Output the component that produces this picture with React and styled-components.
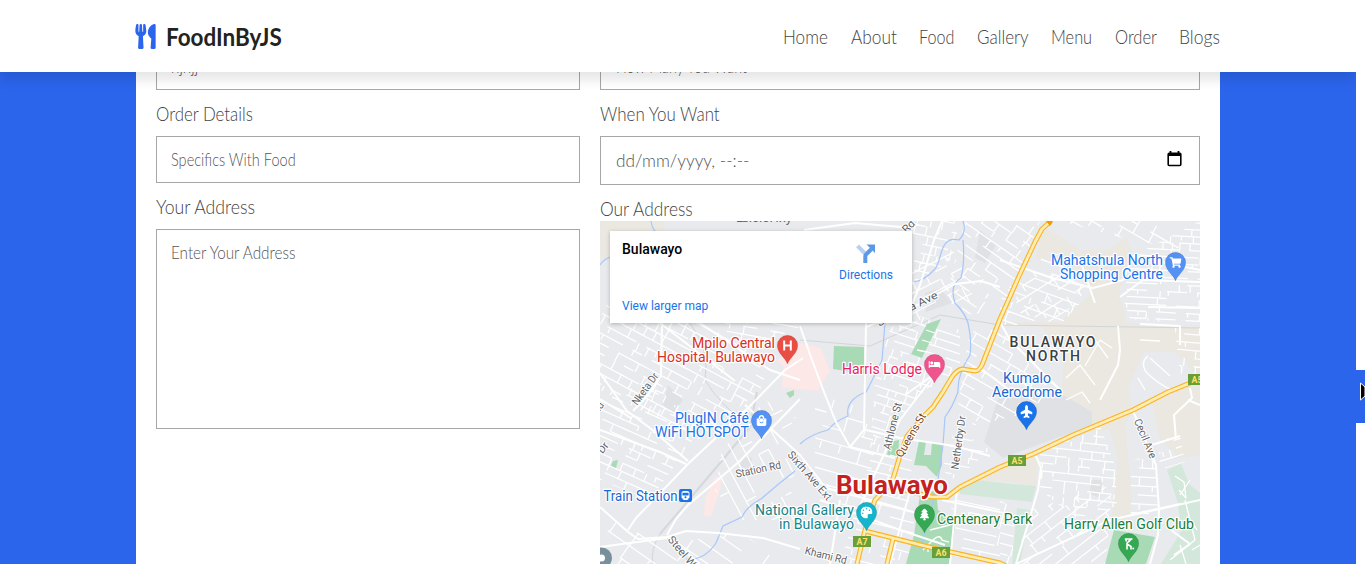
import React, { useLayoutEffect, useRef, useState } from "react";
import styled, { createGlobalStyle } from "styled-components";
import { FaUtensils, FaShoppingCart, FaBed, FaPlane, FaTree, FaPalette, FaShoppingBag, FaTrain } from "react-icons/fa";

const GlobalStyle = createGlobalStyle`
  * { box-sizing: border-box; }
  body { margin: 0; background: #fff; overflow: hidden; font-family: Lato, "Liberation Sans", sans-serif; }
`;

const Screen = styled.div`
  display: flex;
  width: 1365px;
  height: 564px;
  overflow: hidden;
`;
const Page = styled.div`
  width: 1356px;
  height: 564px;
  overflow: hidden;
  display: flex;
  flex-direction: column;
  background: #2b65ec;
`;
const Header = styled.header`
  position: relative;
  z-index: 2;
  flex: none;
  height: 72px;
  padding: 0 136px 0 135px;
  display: flex;
  align-items: center;
  justify-content: space-between;
  background: #fff;
  box-shadow: 0 8px 11px rgba(0, 0, 0, 0.1);
`;
const Brand = styled.div`
  display: flex;
  align-items: center;
  gap: 10px;
  color: #222;
  font-size: 24.5px;
  font-weight: 700;
  line-height: 30px;
  padding-top: 1px;
  svg { width: 21px; height: 25px; color: #2b65ec; }
`;
const Nav = styled.nav`
  display: flex;
  gap: 22.5px;
  color: #444;
  font-size: 20.5px;
  font-weight: 300;
  line-height: 24px;
`;
const Main = styled.main`
  flex: 1;
  min-height: 0;
  overflow: hidden;
  display: flex;
  justify-content: center;
`;
const Form = styled.form`
  width: 1084px;
  margin-top: -29px;
  height: 521px;
  padding: 0 20px;
  display: flex;
  gap: 20px;
  background: #fff;
  font-weight: 300;
`;
const Column = styled.div`
  width: ${(p) => p.$width}px;
  display: flex;
  flex-direction: column;
`;
const Label = styled.label`
  flex: none;
  height: ${(p) => (p.$tight ? 36 : 46)}px;
  padding-top: 11px;
  color: #444;
  font-size: 20.5px;
  line-height: 24px;
`;
const Field = styled.div`
  flex: none;
  display: flex;
  justify-content: space-between;
  height: ${(p) => p.$height || 47}px;
  padding: ${(p) => p.$pad || "13px 13.5px"};
  border: 1px solid #a7a7a7;
  color: ${(p) => (p.$filled ? "#444" : "#555")};
  font-size: 17px;
  line-height: 20px;
`;
const MapFrame = styled.div`
  position: relative;
  flex: none;
  width: 600px;
  height: 343px;
  overflow: hidden;
  font-family: Roboto, sans-serif;
  font-weight: 400;
`;
const PlaceCard = styled.div`
  position: absolute;
  left: 10px;
  top: 10px;
  width: 302px;
  height: 92px;
  padding: 9px 19px 9px 12px;
  display: flex;
  justify-content: space-between;
  background: #fff;
  box-shadow: 0 1px 4px rgba(0, 0, 0, 0.25);
  font-size: 12px;
  line-height: 16px;
  color: #1a73e8;
`;
const PlaceInfo = styled.div`
  display: flex;
  flex-direction: column;
  justify-content: space-between;
`;
const PlaceName = styled.strong`
  color: #000;
  font-size: 14px;
  font-weight: 500;
  line-height: 18px;
`;
const Directions = styled.div`
  display: flex;
  flex-direction: column;
  align-items: center;
  padding-top: 4px;
  gap: 4px;
`;
const Scrollbar = styled.div`
  width: 9px;
  padding-top: 370px;
  background: #fff;
`;
const Thumb = styled.div`
  height: 53px;
  background: #2b65ec;
  display: flex;
  align-items: center;
  justify-content: flex-end;
  overflow: hidden;
  padding-bottom: 9px;
`;
const FitBox = styled.span`
  display: inline-block;
  width: ${(p) => p.$width}px;
  white-space: nowrap;
`;
const FitInner = styled.span`
  display: inline-block;
  transform-origin: 0 50%;
`;

function Fit({ width, children }) {
  const ref = useRef(null);
  const [scale, setScale] = useState(1);
  useLayoutEffect(() => {
    setScale(width / ref.current.offsetWidth);
  }, [width]);
  return (
    <FitBox $width={width}>
      <FitInner ref={ref} style={{ transform: `scaleX(${scale})` }}>{children}</FitInner>
    </FitBox>
  );
}

const NAV = [["Home", 45], ["About", 45.5], ["Food", 35.5], ["Gallery", 51.5], ["Menu", 41.5], ["Order", 42], ["Blogs", 41]];

// Residential blocks: outline, street angle, street spacing along and across.
const DISTRICTS = [
  ["600,280 640,305 700,320 770,365 760,390 700,440 600,390", 28, 9, 11],
  ["600,400 650,380 700,430 650,500 600,480", 24, 8, 12],
  ["725,323 800,323 795,335 730,345", 10, 8, 14],
  ["722,450 765,400 800,420 790,450 800,520 740,520 715,490", 62, 11, 16],
  ["610,520 670,545 740,530 780,564 600,564", 35, 15, 24],
  ["912,221 960,221 950,260 915,285", 12, 9, 13],
  ["965,221 1040,221 1005,310 965,315 950,280", 35, 9, 15],
  ["885,280 955,250 975,300 940,310 900,330", -27, 9, 13],
  ["890,328 920,316 960,330 960,372 925,390 870,450 875,380", 18, 8, 9],
  ["1000,300 1040,250 1080,260 1088,295 1060,325 1000,325", 20, 10, 15],
  ["1030,270 1080,282 1090,295 1050,322 1010,310", -32, 11, 14],
  ["1135,255 1200,221 1200,325 1130,319 1122,295", 3, 7, 10],
  ["1060,221 1150,221 1190,250 1130,240", 30, 10, 15],
  ["970,330 1000,330 1060,390 1040,410 955,430 960,390", 30, 10, 15],
  ["1175,328 1200,328 1200,378 1180,375", 5, 8, 12],
  ["1040,452 1100,426 1115,465 1117,505 1085,525 1040,490", 6, 8, 12],
  ["1030,510 1112,485 1106,564 1015,564", -38, 10, 13],
  ["1131,460 1155,455 1160,516 1131,514", 3, 9, 12],
  ["1158,440 1180,435 1185,462 1160,470", -17, 8, 8],
  ["875,443 912,455 910,510 925,564 840,564", 14, 10, 15],
  ["815,400 865,395 875,450 860,530 815,490", 16, 14, 20],
  ["955,428 990,450 955,480 942,470", 10, 9, 14],
  ["952,500 1000,500 1000,564 948,564", 12, 9, 16],
  ["1000,500 1015,510 1012,564 1000,564", 15, 10, 16],
];

function makeRandom(seed) {
  let s = seed;
  return () => {
    s = (s * 16807) % 2147483647;
    return s / 2147483647;
  };
}

function streets(points, seed, stepY, stepX) {
  const xy = points.split(" ").map((p) => p.split(",").map(Number));
  const cx = xy.reduce((t, p) => t + p[0], 0) / xy.length;
  const cy = xy.reduce((t, p) => t + p[1], 0) / xy.length;
  const rnd = makeRandom(seed * 991 + 17);
  let d = "";
  for (let y = -90; y < 90; y += stepY) {
    for (let x = -90; x < 90; x += stepX) {
      if (rnd() < 0.7) d += `M${cx + x} ${cy + y}h${stepX}`;
      if (rnd() < 0.48) d += `M${cx + x + rnd() * 4} ${cy + y}v${stepY * (rnd() < 0.3 ? 0.6 : 1)}`;
    }
  }
  return { d, cx, cy };
}

const AREAS = [
  ["#ebe8e1", "600,221 665,221 664,231 610,240 610,262 600,256"],
  ["#ebe8e1", "1043,226 1080,250 1108,250 1126,237 1133,256 1127,275 1119,290 1126,323 1200,327 1200,455 1180,458 1160,440 1150,395 1170,365 1150,355 1130,380 1125,420 1132,500 1128,530 1110,530 1118,460 1110,430 1070,434 1048,440 1062,390 1064,350 1040,326 1000,326 1000,322 1060,322 1090,295 1084,270 1036,258"],
  ["#ebe8e1", "957,488 1000,468 1038,456 1036,486 1000,480"],
  ["#ebe8e1", "1170,330 1180,350 1165,350 1160,375 1120,430 1090,430 1110,388 1135,350"],
  ["#e8eaed", "1144,352 1175,352 1200,378 1160,396 1132,408 1128,388"],
  ["#dfe1e5", "1000,392 1062,394 1092,412 1092,425 1032,447 1003,458 984,442"],
  ["#dfe1e5", "1091,480 1102,480 1100,498 1090,494"],
  ["#dfe1e5", "980,230 996,245 985,263 975,258"],
  ["#dfe1e5", "668,385 683,400 673,414 663,405"],
  ["#dfe1e5", "743,456 752,458 750,470 740,466"],
  ["#dfe1e5", "925,293 940,288 952,303 926,312"],
  ["#fce8e6", "800,343 821,348 830,371 818,391 782,388 783,366 777,360"],
  ["#fce8e6", "715,477 722,477 720,490 711,517 704,516 705,498"],
  ["#a8dab5", "834,346 864,347 864,374 833,369"],
  ["#a8dab5", "786,393 794,390 794,395 790,398"],
  ["#a8dab5", "613,461 618,460 616,468 611,466"],
  ["#a8dab5", "890,442 899,440 898,458 887,455"],
  ["#d3e8da", "960,489 975,480 1012,484 1036,486 1032,502 960,494"],
  ["#d3e8da", "1017,508 1030,510 1020,564 1012,564"],
  ["#d3e8da", "1167,470 1181,464 1190,485 1200,493 1200,564 1161,564 1182,530 1177,500"],
];

// Parks that lie over the street grid.
const PARKS = [
  "927,324 941,319 922,358 911,354",
  "919,441 926,442 924,455 931,455 932,442 942,444 942,465 937,477 926,466 914,465",
  "920,495 936,490 938,510 955,525 950,564 906,564 914,535",
  "1114,530 1155,537 1146,564 1105,564",
];

const WATER = [
  "M651 221Q652 232 662 236M600 265Q603 260 610 257",
  "M963 221Q967 232 959 240C938 235 943 262 934 270Q925 280 914 282",
  "M963 240Q965 262 961 278Q949 285 955 303Q965 313 968 323Q972 340 970 355Q957 375 958 392Q952 408 945 417L943 445L938 480L932 505L920 550",
  "M885 323L882 360Q870 385 866 392Q845 400 848 416Q835 421 828 430Q811 434 800 444",
  "M795 471Q778 484 761 499Q746 507 742 517L723 526L716 543Q704 561 686 559",
];

const ROADS = [
  "M600 373L627 411L650 428L688 461M633 411L648 395L661 376L662 323M600 399L631 418",
  "M600 507L628 532L638 539L667 537L686 531L718 533L763 538L800 549",
  "M600 547L667 538M628 530L636 518L690 462L750 406L785 370L803 358",
  "M667 535L676 519L688 505L720 478L741 460L765 435L800 399",
  "M670 539L700 564M745 405L800 455L826 488L900 508L926 516",
  "M800 326L812 360L824 392L836 422L850 447L895 458",
  "M866 323L864 430L850 447M866 430L900 438L955 446L990 456",
  "M905 322L920 285L934 240L942 221M866 327L914 307L955 284L981 281L1000 287",
  "M905 395L936 373L900 420L858 510",
  "M1000 322L1010 340L1060 390M980 368L1020 398",
  "M1133 411L1156 465L1159 510L1158 535L1150 564",
  "M1036 456L1041 468L1038 490L1016 564L1110 520L1200 500",
  "M1000 260L1052 278L1093 288L1123 280L1133 256L1200 270M1080 260L1095 303",
  "M1120 297L1143 280L1200 282M1148 307L1200 308M1140 324L1180 326L1180 345",
  "M1118 326L1120 350L1118 365L1100 400M1190 388L1192 398L1174 415L1176 440M1188 400L1200 405",
  "M1152 445L1180 436M1130 515L1180 504M1171 530L1190 544L1174 555",
  "M820 500L900 530L945 545M840 500L830 564M913 480L890 564M957 490L950 564",
  "M600 430L660 452L686 464M700 323L770 370L800 380M660 323L735 381",
  "M804 230L855 223L912 228M800 280L850 323M942 500L1000 512",
];

const YELLOW = [
  "M1051 221L1042 229L1035 242L1020 274L1000 319L982 365Q979 371 975 371L962 369Q957 370 952 377L943 392L933 407L923 417L907 436L899 459L892 482L875 500L865 530L857 564",
  "M1200 379L1168 392L1133 410L1073 435L1033 454L1000 467L960 487L947 497L932 497L900 489",
  "M865 531L933 548L1000 563L1010 568",
  "M893 539L887 564",
];

const LABELS = [
  // text, x, baseline, width, colour, anchor
  ["Mpilo Central", 775, 348, 83, "#d93025", "end"],
  ["Hospital, Bulawayo", 775, 362, 118, "#d93025", "end"],
  ["Harris Lodge", 922, 374, 80, "#e91e63", "end"],
  ["Mahatshula North", 1163, 265, 112, "#1a73e8", "end"],
  ["Shopping Centre", 1163, 279, 103, "#1a73e8", "end"],
  ["Kumalo", 1027, 383, 48, "#1967d2", "middle"],
  ["Aerodrome", 1027, 397, 70, "#1967d2", "middle"],
  ["PlugIN Câfé", 749, 423, 74, "#1a73e8", "end"],
  ["WiFi HOTSPOT", 749, 437, 94, "#1a73e8", "end"],
  ["Train Station", 603.5, 501, 74, "#1967d2", "start"],
  ["National Gallery", 854, 515, 99, "#12868b", "end"],
  ["in Bulawayo", 854, 529, 75, "#12868b", "end"],
  ["Centenary Park", 937, 524, 95, "#188038", "start"],
  ["Harry Allen Golf Club", 1064, 529, 130, "#188038", "start"],
];

const STREET_NAMES = [
  ["Nketa Dr", 648, 391, 37, -54],
  ["Station Rd", 759, 473, 46, -12],
  ["Sixth Ave Ext", 807, 478, 61, 49],
  ["Steel Works", 686, 562, 58, 50],
  ["Athlone St", 896, 427, 48, -76],
  ["Netherby Dr", 962, 443, 54, -82],
  ["Cecil Ave", 1142, 440, 42, 67],
  ["Khami Rd", 825, 559, 43, 14],
  ["Joshua Ave", 909, 312, 66, -26],
  ["Rd", 911, 229, 13, -45],
  ["Dr", 606, 450, 11, -52],
  ["Rd", 601, 410, 12, -55],
];

function Pin({ x, y, color, size = 12, children }) {
  return (
    <g transform={`translate(${x} ${y})`}>
      <path d="M0 18.5C-2.2 12-10.2 8-10.2 0A10.2 10.2 0 1 1 10.2 0C10.2 8 2.2 12 0 18.5Z" fill={color} stroke="rgba(0,0,0,.18)" strokeWidth=".6" />
      <g transform={`translate(${-size / 2} ${-size / 2})`}>{children}</g>
    </g>
  );
}

function Shield({ x, y, name }) {
  return (
    <g>
      <rect x={x} y={y} width="18" height="11" fill="#689f38" />
      <text x={x + 9} y={y + 8.8} textAnchor="middle" fontSize="8.8" fontWeight="700" fill="#ffe168">{name}</text>
    </g>
  );
}

function CityMap() {
  return (
    <svg width="600" height="343" viewBox="600 221 600 343" fontFamily="Roboto, sans-serif">
      <rect x="600" y="221" width="600" height="343" fill="#e8eaed" />
      {AREAS.map(([fill, points], i) => <polygon key={i} fill={fill} points={points} />)}
      <g fill="none" stroke="#d3d5d8" strokeWidth="1">
        <path d="M690 323Q710 350 705 380Q720 405 745 422M660 534Q650 550 653 564" />
        <path d="M660 534L720 463L750 427L757 392" stroke="#d6d8dc" strokeWidth="2" />
        <path d="M800 340L870 346L940 315L1000 325L1200 328" />
      </g>
      <g fill="none" stroke="#fff" strokeWidth="1.25">
        {DISTRICTS.map(([points, angle, sy, sx], i) => {
          const s = streets(points, i + 1, sy, sx);
          return (
            <g key={i} clipPath={`url(#block${i})`}>
              <clipPath id={`block${i}`}><polygon points={points} /></clipPath>
              <path d={s.d} transform={`rotate(${angle} ${s.cx} ${s.cy})`} />
            </g>
          );
        })}
      </g>
      {PARKS.map((points) => <polygon key={points} fill="#a8dab5" points={points} />)}
      <g fill="none" stroke="#fff" strokeWidth="1.3" strokeLinejoin="round">
        <path d="M923 550L932 541Q940 533 942 540L949 542M930 530L950 525M922 340L932 343M917 350L927 352M926 330L935 333M928 545V552" />
        <path d="M1185 500L1195 540L1170 560M1180 495L1190 480M1175 476L1184 482L1186 498L1179 490M1191 520L1197 530M1180 545L1186 564M1192 550L1200 545" />
        <path d="M1066 378L1080 365L1095 385M1085 366L1100 340L1112 348M1095 340L1108 358M1066 400L1082 392L1090 403M1140 340L1160 341M1148 356Q1140 362 1146 372Q1158 384 1172 390M1150 358L1170 376M1138 378L1145 390" />
      </g>
      <g fill="none" stroke="#a8c7fa" strokeWidth="1.2">{WATER.map((d, i) => <path key={i} d={d} />)}</g>
      <g fill="none" stroke="#fff" strokeWidth="2" strokeLinejoin="round">{ROADS.map((d, i) => <path key={i} d={d} />)}</g>
      <g fill="none" stroke="#fbb424" strokeWidth="5" strokeLinejoin="round">{YELLOW.map((d, i) => <path key={i} d={d} />)}</g>
      <g fill="none" stroke="#ffedb3" strokeWidth="2.7" strokeLinejoin="round">{YELLOW.map((d, i) => <path key={i} d={d} />)}</g>
      <path d="M1046 221H1053L1050 226Z" fill="#f29900" />

      <g fontSize="10.8" fill="#5f6368" stroke="#fff" strokeWidth="2" paintOrder="stroke" textAnchor="middle">
        {STREET_NAMES.map(([t, x, y, w, a], i) => (
          <text key={i} x={x} y={y} textLength={w} lengthAdjust="spacingAndGlyphs" transform={`rotate(${a} ${x} ${y})`}>{t}</text>
        ))}
        <text x="914" y="437" textLength="49" fill="#7a431c" fontSize="11" transform="rotate(-60 914 437)">Queens St</text>
      </g>
      <text x="736" y="221.5" fontSize="13" fill="#5f6368" textLength="56">Luveve Hwy</text>

      <g fontSize="14" stroke="#fff" strokeWidth="2.4" strokeLinejoin="round" paintOrder="stroke">
        {LABELS.map(([t, x, y, w, color, anchor]) => (
          <text key={t} x={x} y={y} textLength={w} lengthAdjust="spacingAndGlyphs" fill={color} textAnchor={anchor}>{t}</text>
        ))}
        <g fill="#3c4043" textAnchor="middle" fontWeight="500">
          <text x="1052.5" y="347" textLength="86">BULAWAYO</text>
          <text x="1053" y="361" textLength="54">NORTH</text>
        </g>
        <text x="836" y="494" fontSize="26" fontWeight="700" textLength="112" lengthAdjust="spacingAndGlyphs" fill="#c5221f" strokeWidth="3">Bulawayo</text>
      </g>

      <Pin x={787.5} y={345.5} color="#ea4d43"><path d="M2.7 1V11M9.3 1V11M2.7 6H9.3" fill="none" stroke="#fff" strokeWidth="2" /></Pin>
      <Pin x={934.5} y={364.5} color="#f0548c"><FaBed size={12} color="#fff" /></Pin>
      <Pin x={1175.5} y={262.5} color="#5491f5"><FaShoppingCart size={12} color="#fff" /></Pin>
      <Pin x={761.5} y={420.5} color="#5491f5" size={11}>
        <FaShoppingBag size={11} color="#fff" />
        <path d="M3.7 7Q5.5 8.6 7.3 7" fill="none" stroke="#5491f5" />
      </Pin>
      <Pin x={1026.5} y={411.5} color="#1a73e8" size={13}><g transform="rotate(-90 6.5 6.5)"><FaPlane size={13} color="#fff" /></g></Pin>
      <Pin x={866.5} y={512.5} color="#12b5cb"><FaPalette size={12} color="#fff" /></Pin>
      <Pin x={924.5} y={514.5} color="#34a853"><FaTree size={12} color="#fff" /></Pin>
      <Pin x={1128.5} y={543.5} color="#34a853">
        <path d="M2.3 1.5H10M3 1L4 4M8.5 2L4.5 5.5V12M4.5 6.5L8.5 9V12" fill="none" stroke="#fff" strokeWidth="1.6" />
        <circle cx="6.5" cy="3.8" r="1.1" fill="#fff" /><circle cx="10.7" cy="11" r="1" fill="#fff" />
      </Pin>
      <circle cx="601.5" cy="558" r="10.5" fill="#78909c" />
      <circle cx="601.5" cy="558" r="3.5" fill="#fff" />
      <rect x="679" y="489" width="13" height="13" rx="2" fill="#1a73e8" />
      <g transform="translate(681 491)"><FaTrain size={9} color="#fff" /></g>

      <Shield x={1008} y={455} name="A5" />
      <Shield x={1188} y={374} name="A5" />
      <Shield x={853} y={536} name="A7" />
      <Shield x={932} y={547} name="A6" />
    </svg>
  );
}

const DirectionsIcon = () => (
  <svg width="20" height="19" viewBox="0 0 20 19">
    <path d="M1.5 1.8L9 9.5" stroke="#b7d1f6" strokeWidth="4" />
    <path d="M9.3 19V12.5Q9.3 11 10.5 10L15.5 5" fill="none" stroke="#5c98e8" strokeWidth="4" />
    <path d="M10.5 .5H19V9Z" fill="#5c98e8" />
  </svg>
);

const CalendarIcon = () => (
  <svg width="15" height="16" viewBox="0 0 15 16">
    <path d="M3.5 0V3M11.5 0V3" stroke="#000" strokeWidth="1.8" />
    <rect x="1.2" y="2.2" width="12.6" height="12.3" rx="1" fill="#fff" stroke="#000" strokeWidth="1.6" />
    <path d="M1 2H14V5H1Z" />
  </svg>
);

export default function App() {
  return (
    <Screen>
      <GlobalStyle />
      <Page>
        <Header>
          <Brand>
            <FaUtensils />
            <Fit width={115.5}>FoodInByJS</Fit>
          </Brand>
          <Nav>
            {NAV.map(([name, width]) => <Fit key={name} width={width}>{name}</Fit>)}
          </Nav>
        </Header>
        <Main>
          <Form>
            <Column $width={424}>
              <Field $filled><Fit width={27}>hjhjj</Fit></Field>
              <Label><Fit width={97}>Order Details</Fit></Label>
              <Field><Fit width={125}>Specifics With Food</Fit></Field>
              <Label><Fit width={99}>Your Address</Fit></Label>
              <Field $height={200}><Fit width={124}>Enter Your Address</Fit></Field>
            </Column>
            <Column $width={600}>
              <Field $pad="13px 15px"><Fit width={131}>How Many You Want</Fit></Field>
              <Label><Fit width={120}>When You Want</Fit></Label>
              <Field $height={49} $pad="14px 17px 14px 15px">
                <Fit width={133}>dd/mm/yyyy, --:--</Fit>
                <CalendarIcon />
              </Field>
              <Label $tight><Fit width={93}>Our Address</Fit></Label>
              <MapFrame>
                <CityMap />
                <PlaceCard>
                  <PlaceInfo>
                    <PlaceName>Bulawayo</PlaceName>
                    <span>View larger map</span>
                  </PlaceInfo>
                  <Directions>
                    <DirectionsIcon />
                    <span>Directions</span>
                  </Directions>
                </PlaceCard>
              </MapFrame>
            </Column>
          </Form>
        </Main>
      </Page>
      <Scrollbar>
        <Thumb>
          <svg width="5" height="20" viewBox="0 0 5 20">
            <path d="M.5 1V18L5 14V5Z" fill="#000" stroke="#fff" />
          </svg>
        </Thumb>
      </Scrollbar>
    </Screen>
  );
}
